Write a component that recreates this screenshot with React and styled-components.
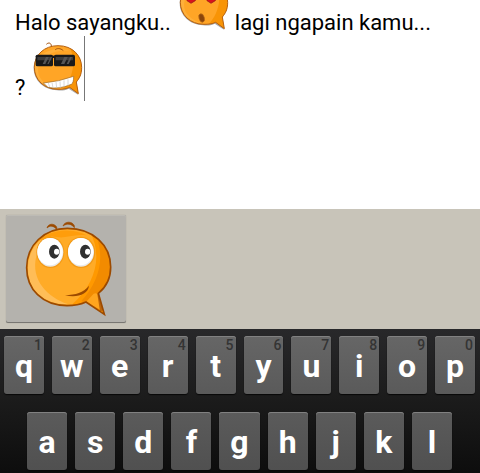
import React from "react";
import styled, { createGlobalStyle } from "styled-components";

const GlobalStyle = createGlobalStyle`
  *, *::before, *::after { box-sizing: border-box; }
  body { margin: 0; background: #fff; font-family: Roboto, "Noto Sans", sans-serif; }
`;

const Screen = styled.main`
  display: flex;
  flex-direction: column;
  height: 100vh;
  overflow: hidden;
`;

const Editor = styled.section`
  flex: 1;
  min-height: 0;
  display: flow-root;
  overflow: hidden;
  background: #fff;
`;

const Message = styled.div`
  margin-top: -29px;
  padding: 0 15px;
  color: #000;
  font-size: 22px;
  line-height: 26px;
  outline: none;
  cursor: text;
`;

const Line = styled.div`
  display: flex;
  align-items: flex-end;
  height: 65px;
`;

const InlineEmoji = styled.svg`
  flex: none;
  width: 50px;
  height: 56px;
  margin: 0 6px 6px 8px;
`;

const Caret = styled.span`
  width: 1px;
  height: 65px;
  margin-left: -5px;
  background: #777;
`;

const EmojiPanel = styled.section`
  flex: none;
  display: flex;
  padding: 6px;
  height: 120px;
  background: #c8c4b9;
`;

const EmojiButton = styled.button`
  width: 120px;
  height: 108px;
  padding: 0;
  border: 0;
  border-radius: 2px;
  background: #b4b2ad;
  box-shadow: inset 0 -1px #787672, inset 0 1px #bdbbb5, 0 0 1px #8e8c86;
  cursor: pointer;

  svg { display: block; width: 120px; height: 108px; }
`;

const Keyboard = styled.section`
  flex: none;
  display: flex;
  flex-direction: column;
  gap: 18px;
  padding: 7px 5px 3px 4px;
  background: linear-gradient(#28282a, #1b1b1b 50%, #0d0d0d);
`;

const KeyRow = styled.div`
  display: grid;
  grid-template-columns: repeat(${(p) => p.$count}, minmax(0, 1fr));
  gap: 8px;
  padding: 0 ${(p) => p.$inset}px;
`;

const KeyCap = styled.button`
  position: relative;
  height: 58px;
  padding: 1px 0 0;
  border: 0;
  border-radius: 3px;
  background: ${(p) => (p.$lower ? "linear-gradient(#5b5b5b, #505050)" : "linear-gradient(#666, #5a5a5a)")};
  box-shadow: inset 0 1px #818181, 0 1px 1px #080808;
  color: #fff;
  font: bold 32px/36px Roboto, "Noto Sans", sans-serif;
  text-align: center;
  cursor: pointer;
`;

const Hint = styled.span`
  position: absolute;
  top: 1px;
  right: 2px;
  color: #343434;
  font-size: 14px;
  font-weight: 500;
  line-height: 16px;
`;

function SmallFace({ label, id, children }) {
  return (
    <InlineEmoji viewBox="27 27 150 168" role="img" aria-label={label}>
      <defs>
        <clipPath id={id}>
          <path d="M102 47C147 47 173 78 173 112C173 134 166 145 157 156L163 191L137 172C126 177 115 178 102 178C60 178 31 149 31 112C31 75 61 47 102 47Z" />
        </clipPath>
      </defs>
      <path d="M102 51C147 51 171 82 171 116C171 138 163 149 155 160L162 194L134 176C120 183 110 182 99 181C59 180 29 151 29 115C29 78 61 51 102 51Z" fill="#aaa" />
      <g clipPath={`url(#${id})`}>
        <rect x="27" y="40" width="150" height="158" fill="#ffa526" />
        <path d="M135 48C157 88 151 143 112 182L180 200V40Z" fill="#f89406" />
        <path d="M35 93C58 59 104 49 137 63C102 56 67 71 46 101C33 135 55 163 96 175C56 174 30 145 31 114Z" fill="#ffb03a" />
      </g>
      <path d="M102 47C147 47 173 78 173 112C173 134 166 145 157 156L163 191L137 172C126 177 115 178 102 178C60 178 31 149 31 112C31 75 61 47 102 47Z" fill="none" stroke="#b56010" strokeWidth="3" strokeLinejoin="round" />
      <path d="M68 42C74 36 82 39 82 47M94 59C98 54 109 54 117 61" fill="none" stroke="#a5530e" strokeWidth="3" strokeLinecap="round" />
      {children}
    </InlineEmoji>
  );
}

function SurprisedFace() {
  return (
    <SmallFace label="love struck" id="surprised-shape">
      <path d="M63 115L51 107C45 95 58 91 63 101C67 91 81 96 76 107Z" fill="#d8131c" stroke="#8d171a" strokeWidth="2" />
      <path d="M123 115L111 107C105 95 118 91 123 101C127 91 141 96 136 107Z" fill="#d8131c" stroke="#8d171a" strokeWidth="2" />
      <ellipse cx="95" cy="159" rx="8" ry="13" transform="rotate(-17 95 159)" fill="#8b450b" stroke="#b96b16" strokeWidth="2" />
    </SmallFace>
  );
}

function CoolFace() {
  return (
    <SmallFace label="cool" id="cool-shape">
      <path d="M58 159Q105 155 149 139Q149 159 142 163Q104 179 72 172Z" fill="#fff" stroke="#9b6720" strokeWidth="2" />
      <path d="M73 159L77 171M84 158L87 173M96 156L98 174M108 154L109 174M120 151L120 171M132 148L132 167" fill="none" stroke="#c4c4c4" strokeWidth="2" />
      <rect x="35" y="74" width="52" height="35" rx="5" fill="#191919" />
      <rect x="90" y="74" width="63" height="35" rx="5" fill="#191919" />
      <path d="M83 77H94V84H83Z" fill="#191919" />
      <path d="M40 81H82V91H40ZM95 81H147V91H95Z" fill="#3d3d3d" />
      <path d="M66 81H74L64 102H56ZM80 81H84L74 102H70ZM121 81H131L121 102H111ZM138 81H144L134 102H128Z" fill="#565656" />
    </SmallFace>
  );
}

function LookingFace() {
  const shape = "M202 70C280 70 332 121 332 186C332 219 320 245 295 265L313 328L258 291C240 299 222 302 201 302C127 301 80 253 80 188C80 120 133 70 202 70Z";
  return (
    <svg viewBox="18 30 360 324" aria-hidden="true">
      <defs>
        <clipPath id="looking-shape"><path d={shape} /></clipPath>
      </defs>
      <g clipPath="url(#looking-shape)">
        <rect x="78" y="65" width="260" height="270" fill="#ffab27" />
        <path d="M270 80C309 154 286 237 217 298L335 340V60Z" fill="#ff9900" />
        <path d="M285 86C317 153 299 228 244 288L340 335V60Z" fill="#f28b00" />
        <path d="M258 291L281 266Q291 263 294 270L308 318Z" fill="#ffa51e" />
        <path d="M84 194C83 118 141 72 222 78C172 82 126 102 109 153C91 226 143 277 203 297C130 300 84 253 84 194Z" fill="#ffbd57" />
        <path d="M107 113C147 73 215 67 260 91C224 86 198 99 178 97C151 91 128 101 107 113Z" fill="#ff9d0b" />
        <path d="M296 267L304 318" stroke="#bd650a" strokeWidth="8" />
      </g>
      <path d={shape} fill="none" stroke="#9c4a00" strokeWidth="5" strokeLinejoin="miter" />
      <path d="M141 69C144 55 163 54 170 66L171 74C161 62 151 60 141 69ZM189 63C194 48 217 48 223 62L223 68C215 56 201 54 189 63Z" fill="#9c4a00" stroke="#9c4a00" strokeWidth="2" />
      <ellipse cx="151" cy="142" rx="42" ry="47" fill="#f39a16" />
      <ellipse cx="243" cy="142" rx="43" ry="47" fill="#f39a16" />
      <ellipse cx="151" cy="142" rx="39" ry="43" fill="#e9e9e9" />
      <ellipse cx="243" cy="142" rx="39" ry="43" fill="#e9e9e9" />
      <ellipse cx="150" cy="140" rx="38" ry="41" fill="#fff" />
      <ellipse cx="242" cy="140" rx="38" ry="41" fill="#fff" />
      <ellipse cx="163" cy="140" rx="16" ry="21" fill="#303030" />
      <ellipse cx="256" cy="140" rx="16" ry="21" fill="#303030" />
      <ellipse cx="170" cy="140" rx="8" ry="9" fill="#fff" />
      <ellipse cx="263" cy="140" rx="8" ry="9" fill="#fff" />
      <path d="M195 270C228 270 249 263 267 242C265 268 228 280 195 270Z" fill="#9c4a00" />
    </svg>
  );
}

const topRow = ["q1", "w2", "e3", "r4", "t5", "y6", "u7", "i8", "o9", "p0"];
const homeRow = [..."asdfghjkl"];

export default function App() {
  return (
    <>
      <GlobalStyle />
      <Screen>
        <Editor>
          <Message
            role="textbox"
            aria-label="Message"
            aria-multiline="true"
            contentEditable
            suppressContentEditableWarning
            spellCheck={false}
          >
            <Line>
              <span>Halo sayangku..</span>
              <SurprisedFace />
              <span>lagi ngapain kamu...</span>
            </Line>
            <Line>
              <span>?</span>
              <CoolFace />
              <Caret />
            </Line>
          </Message>
        </Editor>
        <EmojiPanel aria-label="Emoticons">
          <EmojiButton type="button" aria-label="Insert looking face">
            <LookingFace />
          </EmojiButton>
        </EmojiPanel>
        <Keyboard aria-label="Keyboard">
          <KeyRow $count={10} $inset={0}>
            {topRow.map(([letter, digit]) => (
              <KeyCap type="button" key={letter}>
                {letter}
                <Hint>{digit}</Hint>
              </KeyCap>
            ))}
          </KeyRow>
          <KeyRow $count={9} $inset={23}>
            {homeRow.map((letter) => (
              <KeyCap type="button" key={letter} $lower>
                {letter}
              </KeyCap>
            ))}
          </KeyRow>
        </Keyboard>
      </Screen>
    </>
  );
}
